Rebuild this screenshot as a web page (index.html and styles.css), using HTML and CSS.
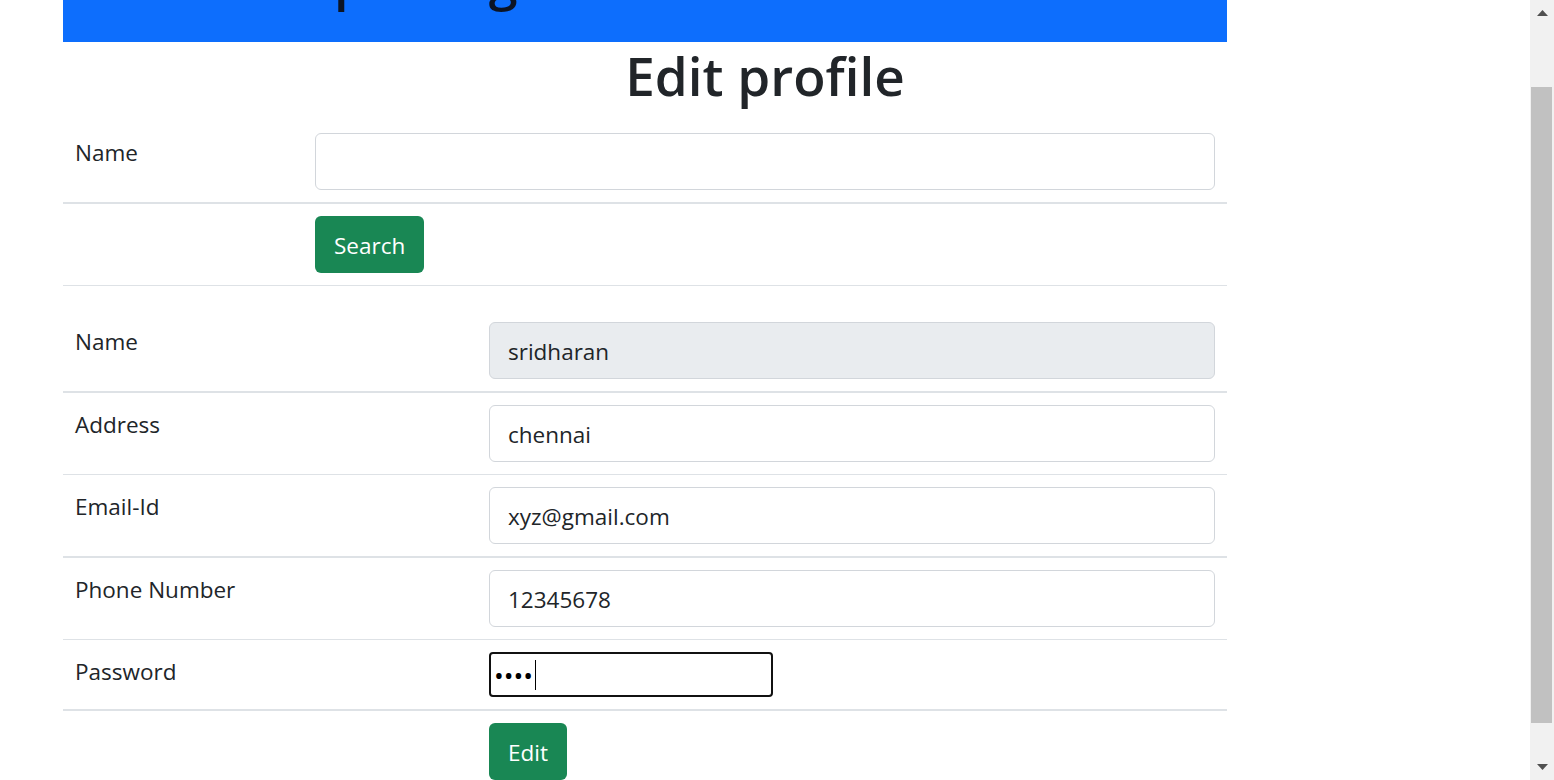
FILE: index.html
```html
<!DOCTYPE html>
<html lang="en">
<head>
<meta charset="utf-8">
<title>Edit profile</title>
<link rel="stylesheet" href="styles.css">
</head>
<body>
<div class="window">
  <main class="viewport">
    <header class="topbar"><span class="brand">Online Sporting</span></header>
    <h1 class="title">Edit profile</h1>

    <form class="ftable search-table">
      <div class="frow thick">
        <div class="cell label">Name</div>
        <div class="cell"><input class="field" type="text" value=""></div>
      </div>
      <div class="frow">
        <div class="cell label"></div>
        <div class="cell"><button class="btn" type="button">Search</button></div>
      </div>
    </form>

    <form class="ftable profile-table">
      <div class="frow thick">
        <div class="cell label">Name</div>
        <div class="cell"><input class="field disabled" type="text" value="sridharan" readonly></div>
      </div>
      <div class="frow">
        <div class="cell label">Address</div>
        <div class="cell"><input class="field" type="text" value="chennai"></div>
      </div>
      <div class="frow thick">
        <div class="cell label">Email-Id</div>
        <div class="cell"><input class="field" type="text" value="xyz@gmail.com"></div>
      </div>
      <div class="frow">
        <div class="cell label">Phone Number</div>
        <div class="cell"><input class="field" type="text" value="12345678"></div>
      </div>
      <div class="frow thick">
        <div class="cell label">Password</div>
        <div class="cell"><div class="pw"><span class="dots">••••</span><span class="caret"></span></div></div>
      </div>
      <div class="frow last">
        <div class="cell label"></div>
        <div class="cell"><button class="btn" type="button">Edit</button></div>
      </div>
    </form>
  </main>

  <div class="scrollbar">
    <div class="sb-btn">
      <svg width="11" height="6" viewBox="0 0 11 6"><polygon points="5.5,0 11,6 0,6" fill="#505050"/></svg>
    </div>
    <div class="sb-track"><div class="sb-thumb"></div></div>
    <div class="sb-btn">
      <svg width="11" height="6" viewBox="0 0 11 6"><polygon points="0,0 11,0 5.5,6" fill="#505050"/></svg>
    </div>
  </div>
</div>
</body>
</html>
```

FILE: styles.css
```css
html, body {
  margin: 0;
  height: 100%;
  overflow: hidden;
}

body {
  font-family: "Open Sans", "Noto Sans", sans-serif;
  font-size: 22.5px;
  line-height: 36px;
  color: #212529;
  background: #fff;
}

.window {
  display: flex;
  height: 780px;
}

.viewport {
  width: 1530px;
  flex: none;
}

.topbar {
  margin-left: 63px;
  width: 1164px;
  height: 42px;
  background: #0d6efd;
  overflow: hidden;
}

.brand {
  display: block;
  font-size: 52px;
  line-height: 54px;
  font-weight: 600;
  margin-top: -48px;
  padding-left: 63px;
  color: #0c1424;
}

.title {
  margin: 0 0 12px;
  text-align: center;
  font-size: 53px;
  line-height: 67px;
  font-weight: 600;
}

.ftable {
  display: block;
  margin: 0 0 0 63px;
  width: 1164px;
}

.search-table {
  margin-bottom: 24px;
  --label: 240px;
}

.profile-table {
  --label: 414px;
}

.frow {
  display: grid;
  grid-template-columns: var(--label) 1fr;
  border-bottom: 1px solid #dee2e6;
}

.frow.thick {
  border-bottom-width: 2px;
}

.frow.last {
  border-bottom: 0;
}

.cell {
  padding: 12px;
}

.cell.label {
  padding-top: 14px;
}

.field {
  display: block;
  width: 100%;
  height: 57px;
  box-sizing: border-box;
  padding: 10px 18px 8px;
  font: inherit;
  color: #212529;
  background: #fff;
  border: 1px solid #d2d6db;
  border-radius: 6px;
  outline: none;
}

.field.disabled {
  background: #e9ecef;
}

.btn {
  display: block;
  height: 57px;
  padding: 2px 19px 0;
  border: 0;
  border-radius: 6px;
  background: #198754;
  color: #fff;
  font: inherit;
}

.pw {
  width: 284px;
  height: 45px;
  box-sizing: border-box;
  border: 2px solid #111;
  border-radius: 4px;
  display: flex;
  align-items: center;
  padding-left: 3px;
}

.dots {
  font-size: 26px;
  color: #000;
}

.caret {
  width: 1px;
  height: 30px;
  margin-left: 2px;
  background: #000;
}

.scrollbar {
  width: 24px;
  flex: none;
  background: #f1f1f1;
  display: flex;
  flex-direction: column;
}

.sb-btn {
  height: 26px;
  display: flex;
  align-items: center;
  justify-content: center;
}

.sb-track {
  flex: 1;
  padding: 61px 2px 31px 1px;
  display: flex;
}

.sb-thumb {
  flex: 1;
  background: #c1c1c1;
}
```
